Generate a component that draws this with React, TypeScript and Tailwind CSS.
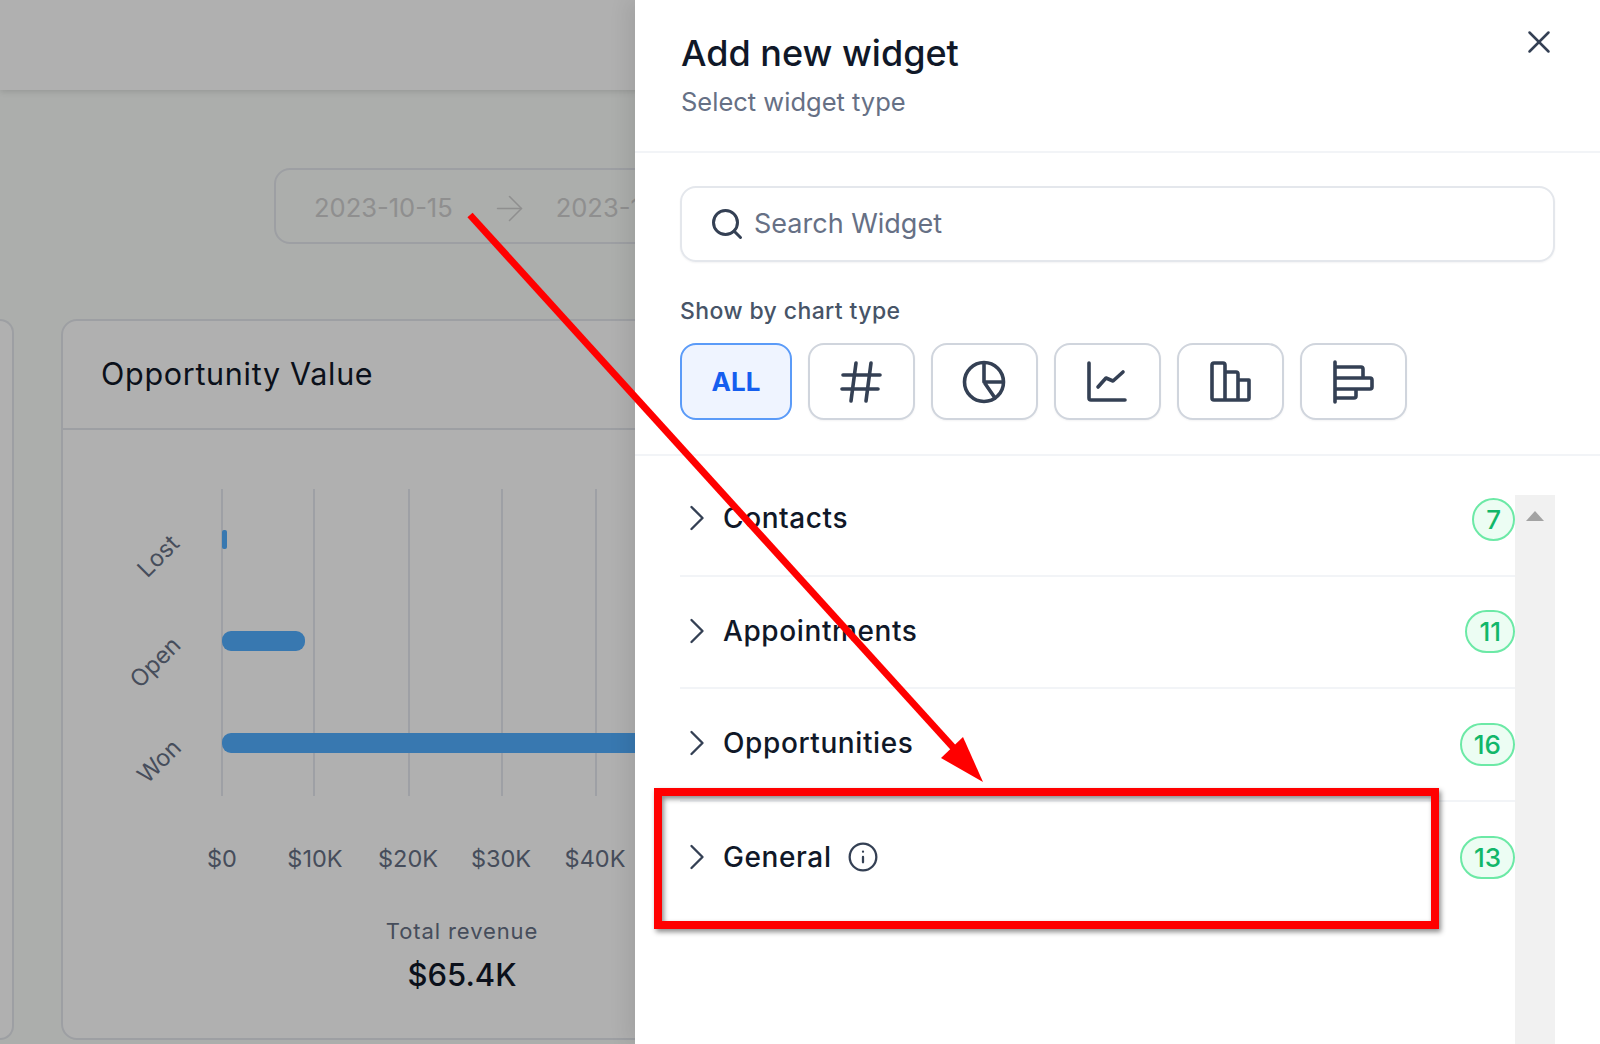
import React from 'react';
import { ChevronRight, Info, Search, X, ArrowRight } from 'lucide-react';

const sections = [
  { name: 'Contacts', count: 7 },
  { name: 'Appointments', count: 11 },
  { name: 'Opportunities', count: 16 },
  { name: 'General', count: 13, info: true },
];

const ChartIcon: React.FC<{ children: React.ReactNode }> = ({ children }) => (
  <svg width="44" height="44" viewBox="0 0 44 44" fill="none" stroke="#344054" strokeWidth="3.6" strokeLinecap="round" strokeLinejoin="round">
    {children}
  </svg>
);

const chartButtons = [
  <ChartIcon key="hash">
    <path d="M4 15H41M3 29H39M17 3L12 41M32 3L27 41" />
  </ChartIcon>,
  <ChartIcon key="pie">
    <circle cx="22" cy="22" r="19.5" />
    <path d="M22 3V22H41M22 22L33 38" />
  </ChartIcon>,
  <ChartIcon key="line">
    <path d="M4 3V38a2 2 0 0 0 2 2H40M13 27L21 18L28 21L38 12" />
  </ChartIcon>,
  <ChartIcon key="bar">
    <path d="M4 5a2 2 0 0 1 2-2H15a2 2 0 0 1 2 2V40H6a2 2 0 0 1-2-2ZM17 12H28a2 2 0 0 1 2 2V40H17M30 20H41V38a2 2 0 0 1-2 2H30" />
  </ChartIcon>,
  <ChartIcon key="hbar">
    <path d="M4 2V42M4 7H30a2 2 0 0 1 2 2V18H4M32 18H39a2 2 0 0 1 2 2V27a2 2 0 0 1-2 2H4M25 29V36a2 2 0 0 1-2 2H4" />
  </ChartIcon>,
];

const gridX = [222, 314, 409, 502, 596];
const ticks = ['$0', '$10K', '$20K', '$30K', '$40K'];
const tickX = [222, 315, 408, 501, 595];

const OpportunityChart = () => (
  <svg width="802" height="472" viewBox="63 429 802 472" className="block" style={{ fontFamily: 'Inter, sans-serif' }}>
    {gridX.map(x => (
      <line key={x} x1={x} x2={x} y1="488" y2="795" stroke="#dde1ea" strokeWidth="1.5" />
    ))}
    <rect x="222" y="529" width="5" height="19" rx="2" fill="#51aeff" />
    <rect x="222" y="630" width="83" height="20" rx="9" fill="#51aeff" />
    <rect x="222" y="732" width="640" height="20" rx="9" fill="#51aeff" />
    {[
      { label: 'Lost', x: 159, y: 556 },
      { label: 'Open', x: 156, y: 662 },
      { label: 'Won', x: 160, y: 761 },
    ].map(l => (
      <text key={l.label} x={l.x} y={l.y + 7} textAnchor="middle" fontSize="23.5" fill="#667085" transform={`rotate(-45 ${l.x} ${l.y})`}>
        {l.label}
      </text>
    ))}
    {ticks.map((t, i) => (
      <text key={t} x={tickX[i]} y="866" textAnchor="middle" fontSize="23.5" fill="#667085">
        {t}
      </text>
    ))}
  </svg>
);

const App: React.FC = () => {
  return (
    <div className="relative h-[1044px] w-[1600px] overflow-hidden bg-[#f9fcf9] [font-family:Inter,sans-serif]">
      {/* Dashboard behind the drawer */}
      <div className="h-[90px] bg-white shadow-[0_2px_6px_rgba(0,0,0,0.12)]" />

      <div className="pl-[274px] pt-[78px]">
        <div className="flex h-[76px] w-[600px] items-center rounded-[16px] border-2 border-[#e4e7ec] pl-[38px] pt-[5px] text-[25.5px] text-[#cfcfcf]">
          <span>2023-10-15</span>
          <ArrowRight className="ml-[36px] mr-[26px] h-[41px] w-[41px]" strokeWidth={0.9} />
          <span>2023-10-31</span>
        </div>
      </div>

      <div className="mt-[75px] flex items-start">
        <div className="h-[721px] w-[14px] rounded-r-[16px] border-2 border-l-0 border-[#e4e7ec] bg-white" />
        <div className="ml-[47px] h-[721px] w-[802px] rounded-[16px] border-2 border-[#e4e7ec] bg-white">
          <div className="flex h-[109px] items-center border-b-2 border-[#e4e7ec] pb-[2px] pl-[38px] text-[30.5px] tracking-[0.7px] text-[#101828]">
            Opportunity Value
          </div>
          <OpportunityChart />
          <div className="mt-[14px] text-center text-[22px] leading-[30px] tracking-[0.9px] text-[#667085]">Total revenue</div>
          <div className="mt-[9px] text-center text-[31px] font-medium leading-[40px] text-[#101828]">$65.4K</div>
        </div>
      </div>

      <div className="absolute inset-0 bg-black/[0.31]" />

      {/* Add widget drawer */}
      <aside className="absolute bottom-0 right-0 top-0 flex w-[965px] flex-col bg-white shadow-[-8px_0_18px_rgba(0,0,0,0.08)]">
        <header className="relative h-[153px] border-b-2 border-[#f2f4f7] pl-[46px] pt-[28px]">
          <h1 className="text-[36px] font-medium leading-[50px] text-[#101828]">Add new widget</h1>
          <p className="mt-[6px] text-[25.5px] leading-[36px] text-[#667085]">Select widget type</p>
          <X className="absolute right-[42px] top-[23px] h-[38px] w-[38px] text-[#344054]" strokeWidth={1.6} />
        </header>

        <div className="h-[303px] border-b-2 border-[#f2f4f7] pl-[45px] pr-[45px] pt-[33px]">
          <div className="flex h-[76px] w-[875px] items-center rounded-[16px] border-2 border-[#e4e7ec] pl-[27px] shadow-[0_1px_2px_rgba(16,24,40,0.05)]">
            <Search className="h-[36px] w-[36px] text-[#344054]" strokeWidth={2} />
            <span className="ml-[9px] text-[27px] text-[#667085]">Search Widget</span>
          </div>
          <div className="mt-[33px] text-[23px] font-medium leading-[32px] tracking-[0.4px] text-[#475467]">Show by chart type</div>
          <div className="mt-[16px] flex gap-[15.5px]">
            <button className="flex h-[77px] w-[112px] items-center justify-center rounded-[16px] border-2 border-[#5b9bf8] bg-[#eff4ff] text-[26px] font-bold text-[#155eef]">
              ALL
            </button>
            {chartButtons.map((icon, i) => (
              <button key={i} className="flex h-[77px] w-[107.5px] items-center justify-center rounded-[16px] border-2 border-[#d0d5dd] bg-white shadow-[0_1px_2px_rgba(16,24,40,0.05)]">
                {icon}
              </button>
            ))}
          </div>
        </div>

        <div className="flex min-h-0 flex-1 pl-[45px] pr-[45px] pt-[8px]">
          <div className="flex-1">
            {sections.map((s, i) => (
              <div key={s.name} className={`flex h-[112.5px] items-center ${i < 3 ? 'border-b-2 border-[#f2f4f7]' : ''}`}>
                <div className="flex items-center pb-[2px]">
                  <ChevronRight className="ml-[-5px] h-[44px] w-[44px] text-[#344054]" strokeWidth={1.3} />
                  <span className="ml-[4px] text-[28px] font-medium tracking-[0.6px] text-[#101828]">{s.name}</span>
                  {s.info && <Info className="ml-[15px] h-[32px] w-[32px] text-[#344054]" strokeWidth={1.7} />}
                </div>
                <span className="ml-auto flex h-[43px] min-w-[42px] items-center justify-center rounded-full border-2 border-[#6ce9a6] bg-[#ecfdf3] px-[12px] text-[26px] font-medium text-[#12b76a]">
                  {s.count}
                </span>
              </div>
            ))}
          </div>
          <div className="mt-[31px] flex w-[40px] justify-center bg-[#f1f1f1] pt-[16px]">
            <div className="h-0 w-0 border-x-[9px] border-b-[10px] border-x-transparent border-b-[#a3a3a3]" />
          </div>
        </div>
      </aside>

      {/* Annotation */}
      <div className="absolute left-[654px] top-[788px] h-[141px] w-[785px] border-[8px] border-[#ff0000] shadow-[2px_3px_5px_rgba(0,0,0,0.45),inset_2px_3px_5px_rgba(0,0,0,0.45)]" />
      <svg className="absolute left-0 top-0" width="1600" height="1044" fill="none">
        <path d="M470 215L960 755" stroke="#ff0000" strokeWidth="7" />
        <path d="M983 782L941 758L963 737Z" fill="#ff0000" />
      </svg>
    </div>
  );
};

export default App;
